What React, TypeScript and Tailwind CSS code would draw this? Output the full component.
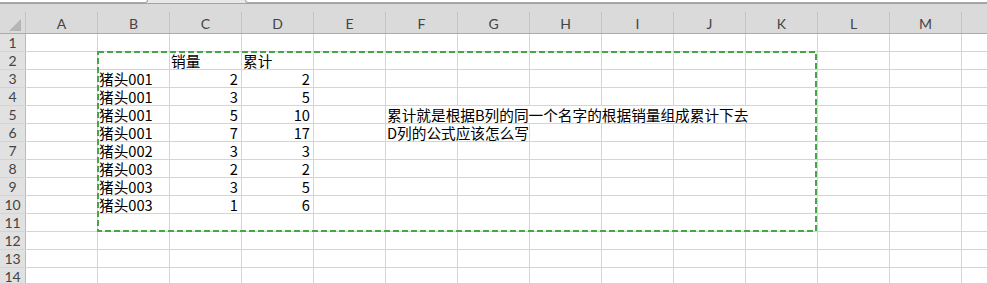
import React from "react";

type Cell = { text?: string; right?: boolean; span?: number };

const COLS = ["A", "B", "C", "D", "E", "F", "G", "H", "I", "J", "K", "L", "M"];

const spanWidth: Record<number, string> = {
  1: "w-[72px]",
  2: "w-[144px]",
  6: "w-[432px]",
};

const sales: [string, string, string][] = [
  ["猪头001", "2", "2"],
  ["猪头001", "3", "5"],
  ["猪头001", "5", "10"],
  ["猪头001", "7", "17"],
  ["猪头002", "3", "3"],
  ["猪头003", "2", "2"],
  ["猪头003", "3", "5"],
  ["猪头003", "1", "6"],
];

// cells keyed by column index (A = 0)
function buildRows(): Record<number, Cell>[] {
  const rows: Record<number, Cell>[] = [];
  for (let i = 0; i < 14; i++) rows.push({});
  rows[1][2] = { text: "销量" };
  rows[1][3] = { text: "累计" };
  sales.forEach(([name, qty, sum], i) => {
    rows[i + 2][1] = { text: name };
    rows[i + 2][2] = { text: qty, right: true };
    rows[i + 2][3] = { text: sum, right: true };
  });
  rows[4][5] = { text: "累计就是根据B列的同一个名字的根据销量组成累计下去", span: 6 };
  rows[5][5] = { text: "D列的公式应该怎么写", span: 2 };
  return rows;
}

function rowCells(values: Record<number, Cell>): Cell[] {
  const out: Cell[] = [];
  let c = 0;
  while (c < COLS.length) {
    const cell = values[c] ?? {};
    out.push(cell);
    c += cell.span ?? 1;
  }
  return out;
}

const cjk = { fontFamily: '"Noto Sans CJK SC", "Noto Sans", sans-serif' };
const hdr = { fontFamily: 'Lato, "Liberation Sans", sans-serif' };

export default function App() {
  const rows = buildRows();

  return (
    <div className="relative w-[987px] h-[283px] overflow-hidden bg-white">
      {/* formula bar edges */}
      <div className="flex h-[3px] bg-[#e8e8e8]">
        <div className="w-[148px] bg-white border-b border-r border-[#a8a8a8] rounded-br-[3px]" />
        <div className="w-[97px]" />
        <div className="flex-1 bg-white border-b border-l border-[#a8a8a8] rounded-bl-[3px]" />
      </div>

      {/* column headers */}
      <div className="flex h-[31px] bg-[#dadada] border-t border-b border-t-[#a3a3a3] border-b-[#ababab]" style={hdr}>
        <div className="w-[26px] flex items-end">
          <div className="w-full h-[21px] border-r border-[#c4c4c4] flex items-end justify-end pr-[4px] pb-[2px]">
            <svg width="12" height="12" viewBox="0 0 12 12">
              <polygon points="12,0 12,12 0,12" fill="#b5b5b5" />
            </svg>
          </div>
        </div>
        {COLS.map((c) => (
          <div key={c} className="w-[72px] flex items-end">
            <div className="w-full h-[21px] border-r border-[#c4c4c4] flex items-center justify-center text-[14px] text-[#444] pt-[1px]">
              {c}
            </div>
          </div>
        ))}
        <div className="flex-1" />
      </div>

      {/* rows */}
      {rows.map((vals, r) => (
        <div key={r} className="flex h-[18px] border-b border-[#d4d4d4]">
          <div
            className="w-[26px] bg-[#e1e1e1] border-r border-[#bababa] flex items-center justify-center text-[14px] text-[#444] leading-[17px]"
            style={hdr}
          >
            {r + 1}
          </div>
          {rowCells(vals).map((cell, i) => (
            <div
              key={i}
              className={`${spanWidth[cell.span ?? 1]} border-r border-[#d4d4d4] whitespace-nowrap text-[14.67px] leading-[17px] text-black ${
                cell.right ? "text-right pr-[3px]" : "text-left pl-[1px]"
              }`}
              style={cjk}
            >
              {cell.text}
            </div>
          ))}
          <div className="flex-1" />
        </div>
      ))}

      {/* copy marquee */}
      <svg className="absolute left-[97px] top-[51px]" width="720" height="182">
        <rect
          x="1"
          y="1"
          width="718"
          height="179"
          fill="none"
          stroke="#46a546"
          strokeWidth="2"
          strokeDasharray="6 3"
        />
      </svg>
    </div>
  );
}
